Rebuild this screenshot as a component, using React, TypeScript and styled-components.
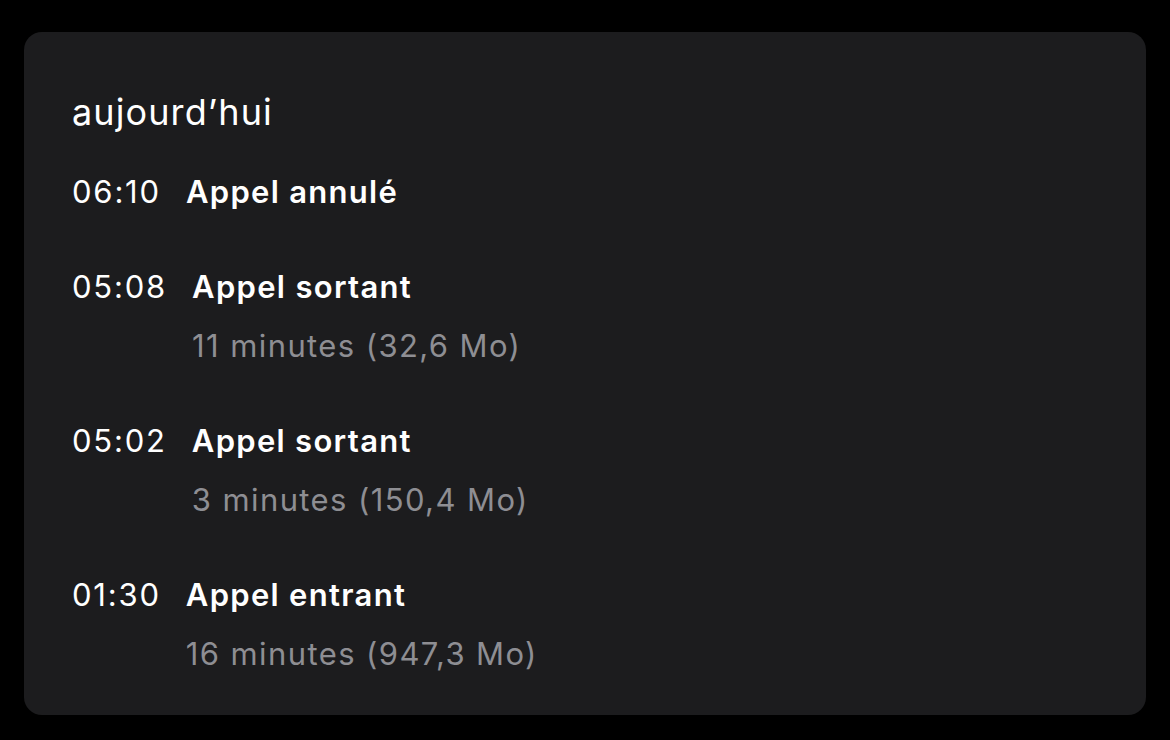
import React from 'react'
import styled, { createGlobalStyle } from 'styled-components'

interface CallEntry {
  time: string
  title: string
  detail?: string
}

const calls: CallEntry[] = [
  { time: '06:10', title: 'Appel annulé' },
  { time: '05:08', title: 'Appel sortant', detail: '11 minutes (32,6 Mo)' },
  { time: '05:02', title: 'Appel sortant', detail: '3 minutes (150,4 Mo)' },
  { time: '01:30', title: 'Appel entrant', detail: '16 minutes (947,3 Mo)' },
]

const App = () => {
  return (
    <>
      <GlobalStyle />
      <Card>
        <Heading>aujourd’hui</Heading>
        <List>
          {calls.map((call, index) => (
            <Row key={index}>
              <Time>{call.time}</Time>
              <Info>
                <Title>{call.title}</Title>
                {call.detail && <Detail>{call.detail}</Detail>}
              </Info>
            </Row>
          ))}
        </List>
      </Card>
    </>
  )
}

export default App

const GlobalStyle = createGlobalStyle`
  html, body {
    margin: 0;
    background: #000;
  }
  body {
    font-family: Inter, "Noto Sans", sans-serif;
    -webkit-font-smoothing: antialiased;
  }
`

const Card = styled.div`
  box-sizing: border-box;
  margin: 32px 0 0 24px;
  width: 1122px;
  height: 683px;
  padding: 58px 48px 0;
  background: #1c1c1e;
  border-radius: 18px;
`

const Heading = styled.h2`
  margin: 0;
  font-size: 36px;
  font-weight: 400;
  line-height: 44px;
  letter-spacing: 1.1px;
  color: #fff;
`

const List = styled.div`
  display: flex;
  flex-direction: column;
  gap: 36px;
  margin-top: 28px;
`

const Row = styled.div`
  display: flex;
  align-items: flex-start;
  gap: 25px;
`

const Time = styled.span`
  font-size: 31px;
  line-height: 59px;
  letter-spacing: 1.8px;
  color: #fff;
`

const Info = styled.div`
  display: flex;
  flex-direction: column;
`

const Title = styled.span`
  font-size: 31px;
  font-weight: 600;
  line-height: 59px;
  letter-spacing: 1.3px;
  color: #fff;
`

const Detail = styled.span`
  font-size: 31px;
  line-height: 59px;
  letter-spacing: 1.4px;
  color: #8e8e93;
`
